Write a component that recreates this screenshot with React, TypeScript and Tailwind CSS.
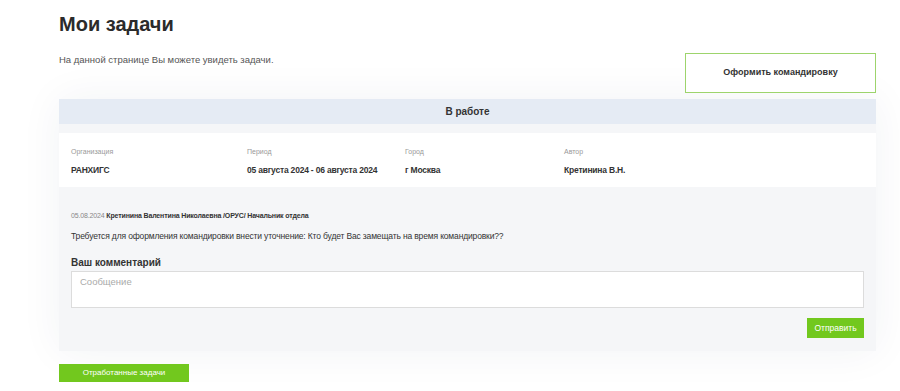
import React from "react";

const info = [
  { label: "Организация", value: "РАНХИГС", w: "w-[176px]" },
  { label: "Период", value: "05 августа 2024 - 06 августа 2024", w: "w-[158px]" },
  { label: "Город", value: "г Москва", w: "w-[159px]" },
  { label: "Автор", value: "Кретинина В.Н.", w: "w-[160px]" },
];

export default function App() {
  return (
    <div className="min-h-[391px] bg-white font-['Liberation_Sans',sans-serif] text-[#333]">
      <div className="ml-[59px] w-[817px] pt-[12px]">
        <h1 className="text-[20px] font-bold leading-[24px] text-[#2b2b2b]">Мои задачи</h1>

        <div className="mt-[17px] flex items-start justify-between">
          <p className="mt-[1px] text-[9.5px] leading-[12px] text-[#555]">
            На данной странице Вы можете увидеть задачи.
          </p>
          <button className="flex h-[40px] w-[191px] items-center justify-center border border-[#9dd46c] bg-white text-[9px] font-bold text-[#333]">
            Оформить командировку
          </button>
        </div>

        <div className="mt-[6px] shadow-[0_0_40px_rgba(30,50,90,0.06)]">
          <div className="flex h-[25px] items-center justify-center bg-[#e5ebf4] text-[10px] font-bold text-[#333]">
            В работе
          </div>

          <div className="bg-[#f5f6f8] pb-[13px] pt-[9px]">
            <div className="flex h-[54px] bg-white pl-[12px] pt-[14px]">
              {info.map((i) => (
                <div key={i.label} className={i.w}>
                  <div className="text-[7px] leading-[10px] text-[#999]">{i.label}</div>
                  <div className="mt-[7px] text-[8.5px] font-bold leading-[12px] tracking-[-0.2px] text-[#333]">
                    {i.value}
                  </div>
                </div>
              ))}
            </div>

            <div className="px-[12px] pt-[24px]">
              <div className="text-[7px] leading-[10px] tracking-[-0.15px]">
                <span className="text-[#888]">05.08.2024 </span>
                <span className="font-bold text-[#333]">
                  Кретинина Валентина Николаевна /ОРУС/ Начальник отдела
                </span>
              </div>
              <p className="mt-[9px] text-[8.5px] leading-[12px] tracking-[-0.15px] text-[#333]">
                Требуется для оформления командировки внести уточнение: Кто будет Вас замещать на время командировки??
              </p>
              <div className="mt-[14px] text-[10px] font-bold leading-[13px] text-[#333]">Ваш комментарий</div>
              <div className="mt-[2px] h-[37px] border border-[#dcdcdc] bg-white px-[8px] pt-[4px] text-[9.5px] leading-[12px] text-[#aaa]">
                Сообщение
              </div>
              <div className="mt-[10px] flex justify-end">
                <button className="flex h-[20px] w-[57px] items-center justify-center bg-[#72c81e] text-[8.5px] text-white">
                  Отправить
                </button>
              </div>
            </div>
          </div>
        </div>

        <button className="mt-[13px] flex h-[18px] w-[130px] items-center justify-center bg-[#72c81e] text-[8px] text-white">
          Отработанные задачи
        </button>
      </div>
    </div>
  );
}
